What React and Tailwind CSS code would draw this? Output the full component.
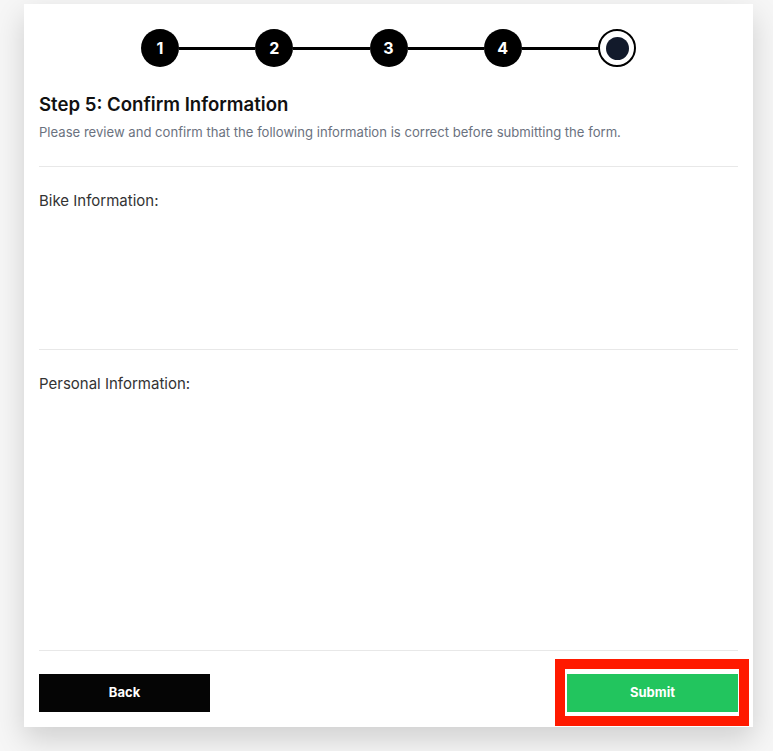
export default function App() {
  const steps = [1, 2, 3, 4];
  return (
    <div className="min-h-[751px] w-[773px] bg-[#f6f6f6] pt-[4px]" style={{ fontFamily: "Inter, 'Noto Sans', sans-serif" }}>
      <div className="ml-[24px] w-[729px] bg-white px-[15px] pt-[25px] pb-[15px] shadow-[0_12px_28px_rgba(0,0,0,0.16)]">
        {/* Stepper */}
        <div className="flex justify-center">
          <div className="flex w-[495px] items-center">
            {steps.map((n) => (
              <div key={n} className="flex flex-1 items-center">
                <div className="flex h-[38px] w-[38px] shrink-0 items-center justify-center rounded-full bg-black text-[16px] font-bold text-white">
                  {n}
                </div>
                <div className="h-[3px] flex-1 bg-black" />
              </div>
            ))}
            <div className="flex h-[38px] w-[38px] shrink-0 items-center justify-center rounded-full border-2 border-black bg-white">
              <div className="h-[23px] w-[23px] rounded-full bg-[#121a2b]" />
            </div>
          </div>
        </div>

        {/* Heading */}
        <h1 className="mt-[23px] text-[18.6px] leading-[28px] font-semibold text-[#111]">Step 5: Confirm Information</h1>
        <p className="mt-[4px] text-[13.1px] leading-[20px] text-[#6b7280]">
          Please review and confirm that the following information is correct before submitting the form.
        </p>

        <div className="mt-[24px] h-px bg-[#e8e8e8]" />

        <div className="h-[182px] pt-[22px]">
          <p className="text-[15px] leading-[24px] text-[#333]">Bike Information:</p>
        </div>

        <div className="h-px bg-[#e8e8e8]" />

        <div className="h-[300px] pt-[22px]">
          <p className="text-[15px] leading-[24px] text-[#333]">Personal Information:</p>
        </div>

        <div className="h-px bg-[#e8e8e8]" />

        <div className="mt-[23px] flex items-center justify-between">
          <button className="h-[38px] w-[171px] bg-[#050505] text-[13px] font-bold text-white">Back</button>
          <div className="relative">
            <button className="h-[38px] w-[171px] bg-[#22c55e] text-[13px] font-bold text-white">Submit</button>
            <span className="pointer-events-none absolute -top-[15px] -right-[11px] -bottom-[14px] -left-[12px] border-[10px] border-[#ff1a00]" />
          </div>
        </div>
      </div>
    </div>
  );
}
